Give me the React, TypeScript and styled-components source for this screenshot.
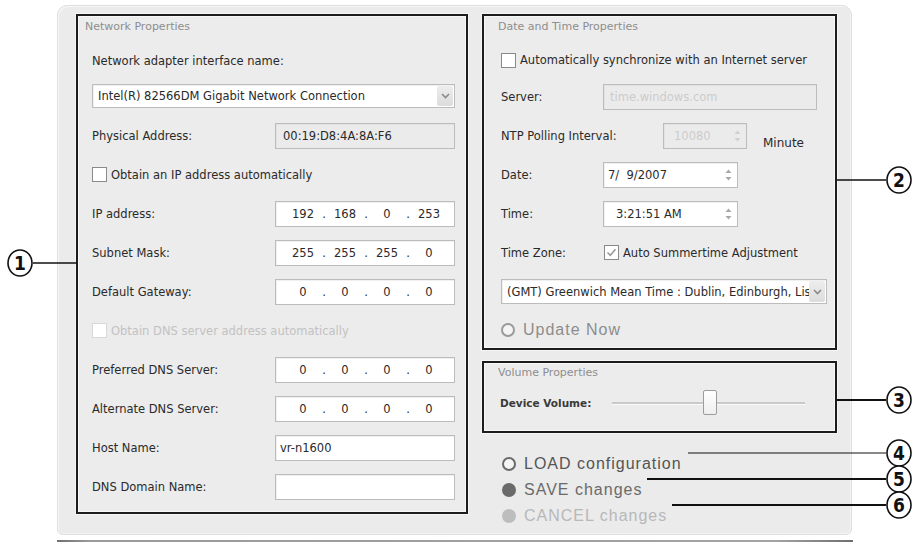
import React from 'react';
import styled, { createGlobalStyle } from 'styled-components';

// ---- colours ------------------------------------------------------------
const COLORS = {
  PAGE: '#ffffff',
  PANEL: '#ebebeb',
  GROUP: '#ececec',
  FRAME: '#1c1c1c',
  TEXT: '#2a2a2a',
  LEGEND: '#8e8e8e',
  DISABLED: '#c2c2c2',
  FIELD_BORDER: '#bcbcbc',
  FIELD_OFF: '#ebebeb',
};

const UI_FONT = '"DejaVu Sans", "Liberation Sans", sans-serif';
const BIG_FONT = '"Liberation Sans", Arial, sans-serif';
const MARK_FONT = '"Liberation Sans Narrow", "DejaVu Sans Condensed", "Liberation Sans", sans-serif';

const GlobalStyle = createGlobalStyle`
  html, body {
    margin: 0;
    padding: 0;
    background: ${COLORS.PAGE};
  }
  body {
    font-family: ${UI_FONT};
    font-size: 11.5px;
    color: ${COLORS.TEXT};
  }
`;

// ---- page / panel --------------------------------------------------------
const Page = styled.div`
  position: relative;
  width: 915px;
  height: 548px;
  box-sizing: border-box;
  padding: 5px 0 0 57px;
  overflow: hidden;
`;

const Panel = styled.div`
  width: 795px;
  height: 530px;
  box-sizing: border-box;
  background: ${COLORS.PANEL};
  border: 1px solid #dedede;
  border-radius: 10px 10px 6px 6px;
  box-shadow: inset 1px 1px 0 #f7f7f7, inset -1px -1px 0 #f4f4f4;
  padding: 8px 0 0 18px;
  display: flex;
  gap: 14px;
`;

const FooterRule = styled.div`
  width: 796px;
  height: 2px;
  margin-top: 5px;
  background: linear-gradient(90deg, #6e6e6e 0, #9a9a9a 4%, #a4a4a4 90%, #6e6e6e 100%);
`;

const RightColumn = styled.div`
  width: 355px;
  display: flex;
  flex-direction: column;
  gap: 11px;
`;

// ---- group boxes ---------------------------------------------------------
const GroupBox = styled.section<{ $h: number; $w?: number }>`
  box-sizing: border-box;
  width: ${({ $w }) => ($w ? `${$w}px` : 'auto')};
  height: ${({ $h }) => $h}px;
  border: 2px solid ${COLORS.FRAME};
  background: ${COLORS.GROUP};
  box-shadow: inset 0 0 0 1px #f8f8f8, 0 0 0 1px #f6f6f6;
  display: flex;
  flex-direction: column;
`;

const Legend = styled.div<{ $inset: number; $h?: number }>`
  height: ${({ $h }) => $h ?? 22}px;
  line-height: ${({ $h }) => $h ?? 22}px;
  padding-left: ${({ $inset }) => $inset}px;
  color: ${COLORS.LEGEND};
  font-size: 11px;
`;

const GroupBody = styled.div<{ $pad: string }>`
  display: flex;
  flex-direction: column;
  padding: ${({ $pad }) => $pad};
`;

const Caption = styled.div`
  height: 46px;
  line-height: 46px;
`;

const Spacer = styled.div<{ $h: number }>`
  height: ${({ $h }) => $h}px;
  flex-shrink: 0;
`;

const Row = styled.div<{ $h?: number; $spread?: boolean }>`
  height: ${({ $h }) => $h ?? 39}px;
  display: flex;
  align-items: center;
  justify-content: ${({ $spread }) => ($spread ? 'space-between' : 'flex-start')};
  flex-shrink: 0;
`;

const Label = styled.span<{ $w?: number }>`
  width: ${({ $w }) => ($w ? `${$w}px` : 'auto')};
  flex-shrink: 0;
  white-space: nowrap;
`;

// ---- fields --------------------------------------------------------------
const TextBox = styled.div<{ $w: number; $h?: number; $off?: boolean; $pad?: number }>`
  position: relative;
  box-sizing: border-box;
  width: ${({ $w }) => $w}px;
  height: ${({ $h }) => $h ?? 26}px;
  padding-left: ${({ $pad }) => $pad ?? 4}px;
  display: flex;
  align-items: center;
  background: ${({ $off }) => ($off ? COLORS.FIELD_OFF : '#fff')};
  border: 1px solid ${COLORS.FIELD_BORDER};
  box-shadow: inset 1px 1px 0 ${({ $off }) => ($off ? '#e2e2e2' : '#f0f0f0')};
  white-space: nowrap;
  overflow: hidden;
`;

const FieldText = styled.span<{ $faded?: boolean }>`
  color: ${({ $faded }) => ($faded ? '#cbcbcb' : COLORS.TEXT)};
`;

const IpBox = styled(TextBox)`
  padding-left: 12px;
`;

const Octet = styled.span`
  width: 30px;
  text-align: center;
`;

const Dot = styled.span`
  width: 12px;
  text-align: center;
`;

const Select = styled(TextBox)`
  padding-left: 5px;
  padding-right: 20px;
`;

const DropButton = styled.span`
  position: absolute;
  top: 1px;
  right: 1px;
  bottom: 1px;
  width: 16px;
  display: flex;
  align-items: center;
  justify-content: center;
  background: linear-gradient(#ededed, #dcdcdc);
  border-radius: 2px;
`;

const SpinArrows = styled.span`
  position: absolute;
  top: 0;
  right: 5px;
  bottom: 0;
  display: flex;
  align-items: center;
`;

const Minute = styled.span`
  margin: 14px 0 0 16px;
  font-size: 12px;
`;

// ---- check boxes ---------------------------------------------------------
const Check = styled.span<{ $off?: boolean }>`
  box-sizing: border-box;
  width: 15px;
  height: 15px;
  margin-right: 4px;
  flex-shrink: 0;
  display: inline-flex;
  align-items: center;
  justify-content: center;
  background: #fff;
  border: 1px solid ${({ $off }) => ($off ? '#d8d8d8' : '#8a8a8a')};
`;

const CheckText = styled.span<{ $off?: boolean }>`
  color: ${({ $off }) => ($off ? COLORS.DISABLED : COLORS.TEXT)};
  white-space: nowrap;
`;

// ---- volume --------------------------------------------------------------
const SmallLabel = styled.span`
  width: 112px;
  font-size: 10.5px;
  font-weight: bold;
  color: #3a3a3a;
`;

const Track = styled.div`
  position: relative;
  width: 193px;
  height: 2px;
  background: #c9c9c9;
  border-bottom: 1px solid #fafafa;
`;

const Thumb = styled.span`
  position: absolute;
  top: -12px;
  width: 14px;
  height: 25px;
  box-sizing: border-box;
  background: linear-gradient(#ffffff, #efefef);
  border: 1px solid #9c9c9c;
  border-radius: 2px;
`;

// ---- big radio-style actions ---------------------------------------------
const ActionList = styled.div`
  display: flex;
  flex-direction: column;
  padding: 7px 0 0 20px;
`;

const Action = styled.div<{ $tone: string }>`
  height: 26px;
  display: flex;
  align-items: center;
  gap: 8px;
  font-family: ${BIG_FONT};
  font-size: 16px;
  letter-spacing: 1px;
  color: ${({ $tone }) => $tone};
  white-space: nowrap;
`;

const Bullet = styled.span<{ $tone: string; $filled?: boolean }>`
  box-sizing: border-box;
  width: 14px;
  height: 14px;
  border-radius: 50%;
  border: 2px solid ${({ $tone }) => $tone};
  background: ${({ $tone, $filled }) => ($filled ? $tone : '#f4f4f4')};
  flex-shrink: 0;
`;

// ---- callout marks --------------------------------------------------------
const Overlay = styled.svg`
  position: absolute;
  top: 0;
  left: 0;
  pointer-events: none;
`;

const CALLOUTS = [
  { n: 1, cx: 20, cy: 263, x1: 33, x2: 77, w: 1.5 },
  { n: 2, cx: 899, cy: 180, x1: 837, x2: 886, w: 1.5 },
  { n: 3, cx: 899, cy: 400, x1: 837, x2: 886, w: 2 },
  { n: 4, cx: 899, cy: 453, x1: 688, x2: 886, w: 1 },
  { n: 5, cx: 899, cy: 479, x1: 647, x2: 886, w: 2.2 },
  { n: 6, cx: 899, cy: 505, x1: 672, x2: 886, w: 2.2 },
];

// ---- small drawings ------------------------------------------------------
const Chevron = () => (
  <svg width="9" height="6" viewBox="0 0 9 6">
    <path d="M1 1 L4.5 4.5 L8 1" fill="none" stroke="#8a8a8a" strokeWidth="1.6" />
  </svg>
);

const Spin = ({ faded }: { faded?: boolean }) => (
  <svg width="7" height="14" viewBox="0 0 7 14">
    <path d="M0.5 5 L3.5 1.5 L6.5 5 Z M0.5 9 L3.5 12.5 L6.5 9 Z" fill={faded ? '#d0d0d0' : '#a8a8a8'} />
  </svg>
);

const Tick = () => (
  <svg width="11" height="11" viewBox="0 0 11 11">
    <path d="M1.5 5.5 L4.3 8.3 L9.5 2.2" fill="none" stroke="#9a9a9a" strokeWidth="1.6" />
  </svg>
);

const IpField = ({ value }: { value: string }) => (
  <IpBox $w={180}>
    {value.split('.').map((part, i) => (
      <React.Fragment key={i}>
        {i > 0 && <Dot>.</Dot>}
        <Octet>{part}</Octet>
      </React.Fragment>
    ))}
  </IpBox>
);

const CheckLine = ({ text, checked, off }: { text: string; checked?: boolean; off?: boolean }) => (
  <>
    <Check $off={off}>{checked && <Tick />}</Check>
    <CheckText $off={off}>{text}</CheckText>
  </>
);

const NETWORK_ROWS: [string, string][] = [
  ['IP address:', '192.168.0.253'],
  ['Subnet Mask:', '255.255.255.0'],
  ['Default Gateway:', '0.0.0.0'],
];

const DNS_ROWS: [string, string][] = [
  ['Preferred DNS Server:', '0.0.0.0'],
  ['Alternate DNS Server:', '0.0.0.0'],
];

export default function App() {
  const volume = 47;

  return (
    <>
      <GlobalStyle />
      <Page>
        <Panel>
          {/* network settings */}
          <GroupBox $h={500} $w={392}>
            <Legend $inset={7}>Network Properties</Legend>
            <GroupBody $pad="0 11px 0 14px">
              <Caption>Network adapter interface name:</Caption>
              <Select $w={363} $h={24}>
                Intel(R) 82566DM Gigabit Network Connection
                <DropButton><Chevron /></DropButton>
              </Select>
              <Spacer $h={8} />
              <Row $spread>
                <Label>Physical Address:</Label>
                <TextBox $w={180} $off $pad={7}>00:19:D8:4A:8A:F6</TextBox>
              </Row>
              <Row>
                <CheckLine text="Obtain an IP address automatically" />
              </Row>
              {NETWORK_ROWS.map(([label, ip]) => (
                <Row $spread key={label}>
                  <Label>{label}</Label>
                  <IpField value={ip} />
                </Row>
              ))}
              <Row>
                <CheckLine text="Obtain DNS server address automatically" off />
              </Row>
              {DNS_ROWS.map(([label, ip]) => (
                <Row $spread key={label}>
                  <Label>{label}</Label>
                  <IpField value={ip} />
                </Row>
              ))}
              <Row $spread>
                <Label>Host Name:</Label>
                <TextBox $w={180}>vr-n1600</TextBox>
              </Row>
              <Row $spread>
                <Label>DNS Domain Name:</Label>
                <TextBox $w={180} />
              </Row>
            </GroupBody>
          </GroupBox>

          <RightColumn>
            {/* date and time */}
            <GroupBox $h={336}>
              <Legend $inset={14}>Date and Time Properties</Legend>
              <GroupBody $pad="5px 7px 0 17px">
                <Row $h={34}>
                  <CheckLine text="Automatically synchronize with an Internet server" />
                </Row>
                <Row>
                  <Label $w={102}>Server:</Label>
                  <TextBox $w={214} $off $pad={6}>
                    <FieldText $faded>time.windows.com</FieldText>
                  </TextBox>
                </Row>
                <Row>
                  <Label $w={162}>NTP Polling Interval:</Label>
                  <TextBox $w={84} $off $pad={10}>
                    <FieldText $faded>10080</FieldText>
                    <SpinArrows><Spin faded /></SpinArrows>
                  </TextBox>
                  <Minute>Minute</Minute>
                </Row>
                <Row>
                  <Label $w={102}>Date:</Label>
                  <TextBox $w={135} $pad={4}>
                    7/&nbsp;&nbsp;9/2007
                    <SpinArrows><Spin /></SpinArrows>
                  </TextBox>
                </Row>
                <Row>
                  <Label $w={102}>Time:</Label>
                  <TextBox $w={135} $pad={12}>
                    3:21:51 AM
                    <SpinArrows><Spin /></SpinArrows>
                  </TextBox>
                </Row>
                <Row>
                  <Label $w={103}>Time Zone:</Label>
                  <CheckLine text="Auto Summertime Adjustment" checked />
                </Row>
                <Row>
                  <Select $w={326} $h={25}>
                    (GMT) Greenwich Mean Time : Dublin, Edinburgh, Lis
                    <DropButton><Chevron /></DropButton>
                  </Select>
                </Row>
                <Row $h={37}>
                  <Action $tone="#8c8c8c">
                    <Bullet $tone="#9a9a9a" />
                    Update Now
                  </Action>
                </Row>
              </GroupBody>
            </GroupBox>

            {/* volume */}
            <GroupBox $h={72}>
              <Legend $inset={14} $h={20}>Volume Properties</Legend>
              <GroupBody $pad="0 0 0 16px">
                <Row $h={40}>
                  <SmallLabel>Device Volume:</SmallLabel>
                  <Track>
                    <Thumb style={{ left: `${volume}%` }} />
                  </Track>
                </Row>
              </GroupBody>
            </GroupBox>

            <ActionList>
              <Action $tone="#555">
                <Bullet $tone="#6a6a6a" />
                LOAD configuration
              </Action>
              <Action $tone="#6a6a6a">
                <Bullet $tone="#6a6a6a" $filled />
                SAVE changes
              </Action>
              <Action $tone="#b8b8b8">
                <Bullet $tone="#bdbdbd" $filled />
                CANCEL changes
              </Action>
            </ActionList>
          </RightColumn>
        </Panel>
        <FooterRule />

        <Overlay width="915" height="548" viewBox="0 0 915 548">
          {CALLOUTS.map(({ n, cx, cy, x1, x2, w }) => (
            <g key={n}>
              <line x1={x1} y1={cy} x2={x2} y2={cy} stroke="#111" strokeWidth={w} />
              <ellipse cx={cx} cy={cy} rx="12" ry="13" fill="#fff" stroke="#111" strokeWidth="1.6" />
              <text
                x={cx}
                y={cy + 6.5}
                textAnchor="middle"
                fontFamily={MARK_FONT}
                fontWeight="bold"
                fontSize="19"
                fill="#111"
              >
                {n}
              </text>
            </g>
          ))}
        </Overlay>
      </Page>
    </>
  );
}
